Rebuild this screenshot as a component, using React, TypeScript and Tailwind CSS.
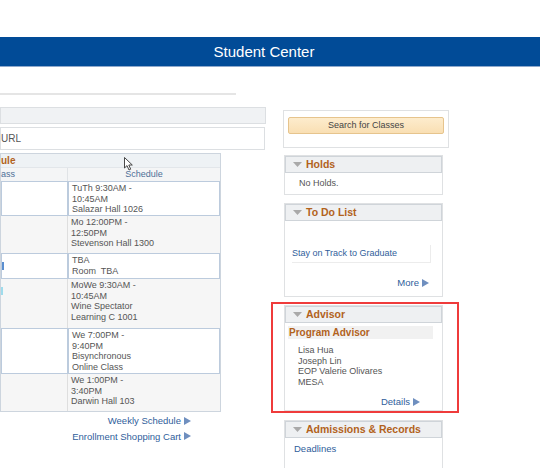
import React from 'react';

const font = { fontFamily: '"Liberation Sans", Arial, sans-serif' };

const rows = [
  { lines: ['TuTh 9:30AM -', '10:45AM', 'Salazar Hall 1026'], h: 'h-[35px]', alt: false, mark: '' },
  { lines: ['Mo 12:00PM -', '12:50PM', 'Stevenson Hall 1300'], h: 'h-[37px]', alt: true, mark: '' },
  { lines: ['TBA', 'Room  TBA'], h: 'h-[26px]', alt: false, mark: 'bg-[#5b8fd0]' },
  { lines: ['MoWe 9:30AM -', '10:45AM', 'Wine Spectator', 'Learning C 1001'], h: 'h-[49px]', alt: true, mark: 'bg-[#9fdcec]' },
  { lines: ['We 7:00PM -', '9:40PM', 'Bisynchronous', 'Online Class'], h: 'h-[46px]', alt: false, mark: '' },
  { lines: ['We 1:00PM -', '3:40PM', 'Darwin Hall 103'], h: 'h-[37px]', alt: true, mark: '' },
];

const Arrow = () => (
  <svg width="7" height="8" viewBox="0 0 7 8" className="inline-block ml-[3px]">
    <path d="M0 0 L7 4 L0 8 Z" fill="#6f8fbf" />
  </svg>
);

const Tri = () => (
  <svg width="9" height="6" viewBox="0 0 9 6" className="mr-[4px]">
    <path d="M0 0 L9 0 L4.5 5 Z" fill="#a9a9a9" />
  </svg>
);

const PanelHeader = ({ title }: { title: string }) => (
  <div className="h-[17px] flex items-center pl-[7px] bg-[#eef0f2] border border-[#cfd4d9]">
    <Tri />
    <span className="text-[10.5px] font-bold text-[#b2621c]">{title}</span>
  </div>
);

export default function App() {
  return (
    <div className="w-[540px] h-[468px] bg-white overflow-hidden relative" style={font}>
      <div className="h-[37px]" />
      <div className="h-[30px] bg-[#014b97] border-b border-[#8fa9cc] flex items-center justify-center">
        <span className="text-white text-[15px] leading-none pr-[12px] pb-[1px]">Student Center</span>
      </div>

      <div className="flex items-start">
        {/* left column */}
        <div className="w-[266px] flex flex-col pt-[26px]">
          <div className="w-[236px] h-[2px] bg-[#e5e5e5]" />
          <div className="mt-[12px] h-[17px] w-[266px] bg-[#f0f2f4] border border-[#dcdfe2]" />
          <div className="mt-[3px] h-[23px] w-[265px] border border-[#dcdfe2] flex items-center text-[10px] text-[#555]">
            URL
          </div>

          <div className="mt-[3px] w-[221px] border border-[#cdd5de] relative">
            <div className="h-[13px] bg-[#eef2f5] flex items-center text-[10px] font-bold text-[#b2621c] leading-none">
              ule
            </div>
            <div className="h-[14px] flex bg-[#f4f5f6] border-t border-[#e2e6ea] text-[9px] text-[#4f6f96]">
              <div className="w-[67px] border-r border-[#e0e3e6] flex items-center">ass</div>
              <div className="flex-1 flex items-center justify-center">Schedule</div>
            </div>
            {rows.map((r, i) => (
              <div
                key={i}
                className={`${r.h} flex ${r.alt ? 'bg-[#f6f6f6]' : 'bg-white'}`}
              >
                <div
                  className={`w-[67px] relative ${r.alt ? 'border-r border-[#dedede]' : 'border border-[#bccbdd]'}`}
                >
                  {r.mark && <div className={`absolute left-0 top-[8px] w-[2px] h-[8px] ${r.mark}`} />}
                </div>
                <div
                  className={`flex-1 pl-[3px] pt-[1px] text-[9px] leading-[10.5px] text-[#555] ${
                    r.alt ? '' : 'border border-[#bccbdd]'
                  }`}
                >
                  {r.lines.map((l, j) => (
                    <div key={j} className="whitespace-pre">{l}</div>
                  ))}
                </div>
              </div>
            ))}
            {/* mouse cursor */}
            <svg width="10" height="15" viewBox="0 0 10 15" className="absolute left-[123px] top-[3px]">
              <path d="M0.5 0.5 L0.5 11 L3 8.6 L5 13 L6.7 12.2 L4.8 8 L8.3 8 Z" fill="#fff" stroke="#333" strokeWidth="0.9" />
            </svg>
          </div>

          <div className="w-[191px] flex flex-col items-end text-[9.5px] text-[#2f5e9b] leading-none">
            <div className="mt-[4px] flex items-center">Weekly Schedule<Arrow /></div>
            <div className="mt-[6px] flex items-center">Enrollment Shopping Cart<Arrow /></div>
          </div>
        </div>

        {/* right column */}
        <div className="ml-[17px] w-[166px] flex flex-col pt-[43px]">
          <div className="h-[38px] border border-[#dfe1e3] pt-[6px] px-[4px]">
            <div className="h-[17px] rounded-[2px] border border-[#e6c48d] bg-gradient-to-b from-[#fdeccd] to-[#f9dfb3] flex items-center justify-center text-[9px] text-[#444]">
              Search for Classes
            </div>
          </div>

          <div className="mt-[7px] w-[159px] border border-[#dfe1e3] ml-[1px]">
            <PanelHeader title="Holds" />
            <div className="h-[21px] pl-[14px] flex items-center text-[9px] text-[#555]">No Holds.</div>
          </div>

          <div className="mt-[8px] w-[159px] h-[94px] border border-[#dfe1e3] ml-[1px] flex flex-col">
            <PanelHeader title="To Do List" />
            <div className="mt-[24px] ml-[7px] w-[139px] h-[18px] border-r border-b border-[#ececec] flex items-center text-[9px] text-[#2f5e9b]">
              Stay on Track to Graduate
            </div>
            <div className="mt-[13px] pr-[13px] flex justify-end items-center text-[9.5px] text-[#2f5e9b]">
              More<Arrow />
            </div>
          </div>

          <div className="mt-[8px] w-[159px] h-[106px] border border-[#dfe1e3] ml-[1px] relative">
            <PanelHeader title="Advisor" />
            <div className="mt-[3px] ml-[3px] w-[145px] h-[13px] bg-[#f1f1f1] flex items-center pl-[1px] text-[10px] font-bold text-[#b2621c]">
              Program Advisor
            </div>
            <div className="mt-[6px] pl-[13px] text-[9px] leading-[10.5px] text-[#555]">
              <div>Lisa Hua</div>
              <div>Joseph Lin</div>
              <div>EOP Valerie Olivares</div>
              <div>MESA</div>
            </div>
            <div className="mt-[8px] pr-[22px] flex justify-end items-center text-[9.5px] text-[#2f5e9b]">
              Details<Arrow />
            </div>
            <div className="absolute -left-[14px] -top-[4px] w-[188px] h-[111px] border-2 border-[#ef3b3b]" />
          </div>

          <div className="mt-[9px] w-[159px] h-[60px] border border-[#dfe1e3] ml-[1px]">
            <PanelHeader title="Admissions & Records" />
            <div className="mt-[4px] pl-[9px] text-[9.5px] text-[#2f5e9b]">Deadlines</div>
          </div>
        </div>
      </div>
    </div>
  );
}
